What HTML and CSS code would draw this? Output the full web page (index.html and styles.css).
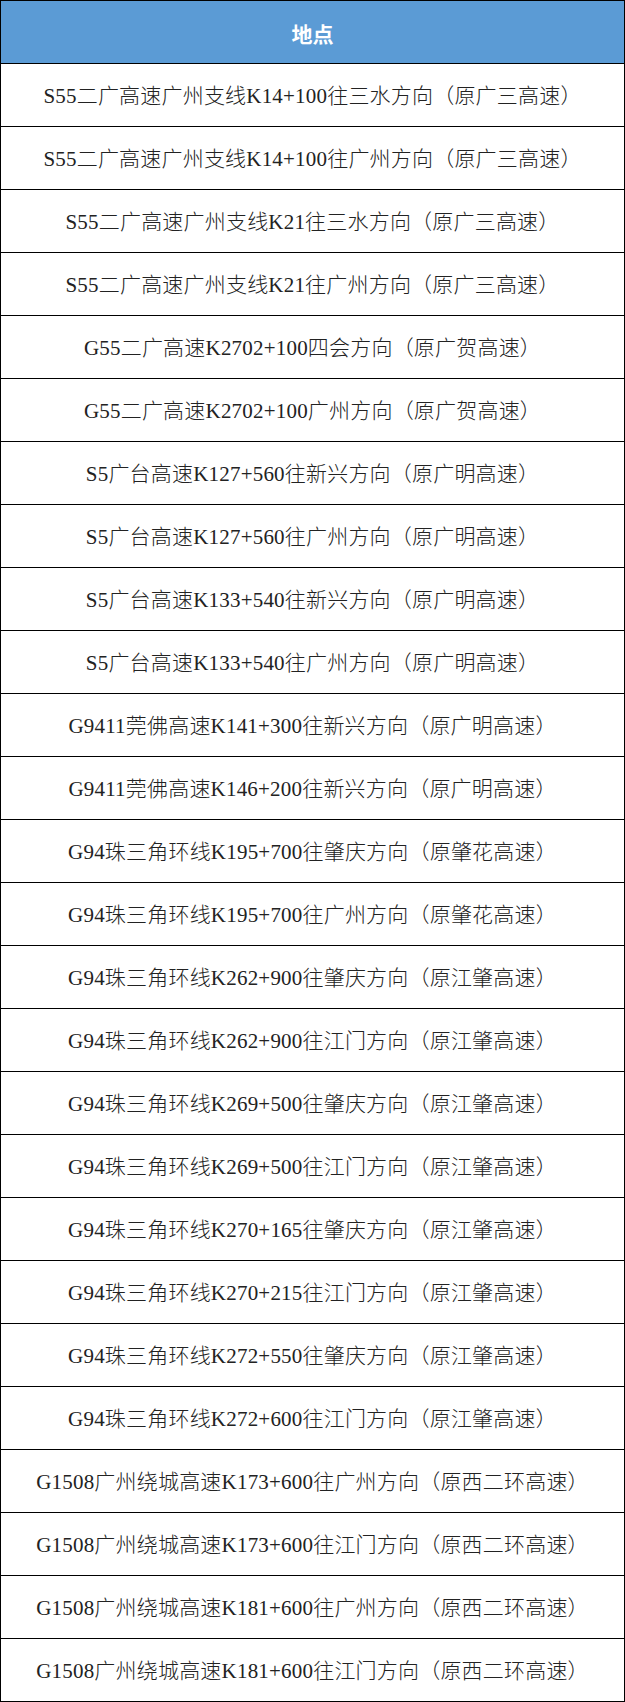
FILE: index.html
```html
<!DOCTYPE html>
<html lang="zh-CN">
<head>
<meta charset="utf-8">
<title>地点</title>
<link rel="stylesheet" href="styles.css">
</head>
<body>
<table class="places">
  <thead>
    <tr><th>地点</th></tr>
  </thead>
  <tbody>
    <tr><td>S55二广高速广州支线K14+100往三水方向（原广三高速）</td></tr>
    <tr><td>S55二广高速广州支线K14+100往广州方向（原广三高速）</td></tr>
    <tr><td>S55二广高速广州支线K21往三水方向（原广三高速）</td></tr>
    <tr><td>S55二广高速广州支线K21往广州方向（原广三高速）</td></tr>
    <tr><td>G55二广高速K2702+100四会方向（原广贺高速）</td></tr>
    <tr><td>G55二广高速K2702+100广州方向（原广贺高速）</td></tr>
    <tr><td>S5广台高速K127+560往新兴方向（原广明高速）</td></tr>
    <tr><td>S5广台高速K127+560往广州方向（原广明高速）</td></tr>
    <tr><td>S5广台高速K133+540往新兴方向（原广明高速）</td></tr>
    <tr><td>S5广台高速K133+540往广州方向（原广明高速）</td></tr>
    <tr><td>G9411莞佛高速K141+300往新兴方向（原广明高速）</td></tr>
    <tr><td>G9411莞佛高速K146+200往新兴方向（原广明高速）</td></tr>
    <tr><td>G94珠三角环线K195+700往肇庆方向（原肇花高速）</td></tr>
    <tr><td>G94珠三角环线K195+700往广州方向（原肇花高速）</td></tr>
    <tr><td>G94珠三角环线K262+900往肇庆方向（原江肇高速）</td></tr>
    <tr><td>G94珠三角环线K262+900往江门方向（原江肇高速）</td></tr>
    <tr><td>G94珠三角环线K269+500往肇庆方向（原江肇高速）</td></tr>
    <tr><td>G94珠三角环线K269+500往江门方向（原江肇高速）</td></tr>
    <tr><td>G94珠三角环线K270+165往肇庆方向（原江肇高速）</td></tr>
    <tr><td>G94珠三角环线K270+215往江门方向（原江肇高速）</td></tr>
    <tr><td>G94珠三角环线K272+550往肇庆方向（原江肇高速）</td></tr>
    <tr><td>G94珠三角环线K272+600往江门方向（原江肇高速）</td></tr>
    <tr><td>G1508广州绕城高速K173+600往广州方向（原西二环高速）</td></tr>
    <tr><td>G1508广州绕城高速K173+600往江门方向（原西二环高速）</td></tr>
    <tr><td>G1508广州绕城高速K181+600往广州方向（原西二环高速）</td></tr>
    <tr><td>G1508广州绕城高速K181+600往江门方向（原西二环高速）</td></tr>
  </tbody>
</table>
</body>
</html>
```

FILE: styles.css
```css
html, body {
  margin: 0;
  padding: 0;
  background: #ffffff;
}

.places {
  width: 625px;
  border-collapse: collapse;
  table-layout: fixed;
}

.places tr {
  height: 63px;
}

.places th,
.places td {
  border: 1px solid #000000;
  padding: 0;
  text-align: center;
  vertical-align: middle;
}

.places th {
  background: #5b9bd5;
  color: #ffffff;
  font-family: "Noto Sans CJK SC", sans-serif;
  font-weight: 700;
  font-size: 21px;
  line-height: 1;
  padding-top: 2px;
}

.places td {
  color: #222222;
  font-family: "Liberation Serif", "Noto Sans CJK SC", serif;
  font-weight: 300;
  font-size: 21px;
  letter-spacing: 0.2px;
  line-height: 1;
  padding-top: 3px;
}
```
